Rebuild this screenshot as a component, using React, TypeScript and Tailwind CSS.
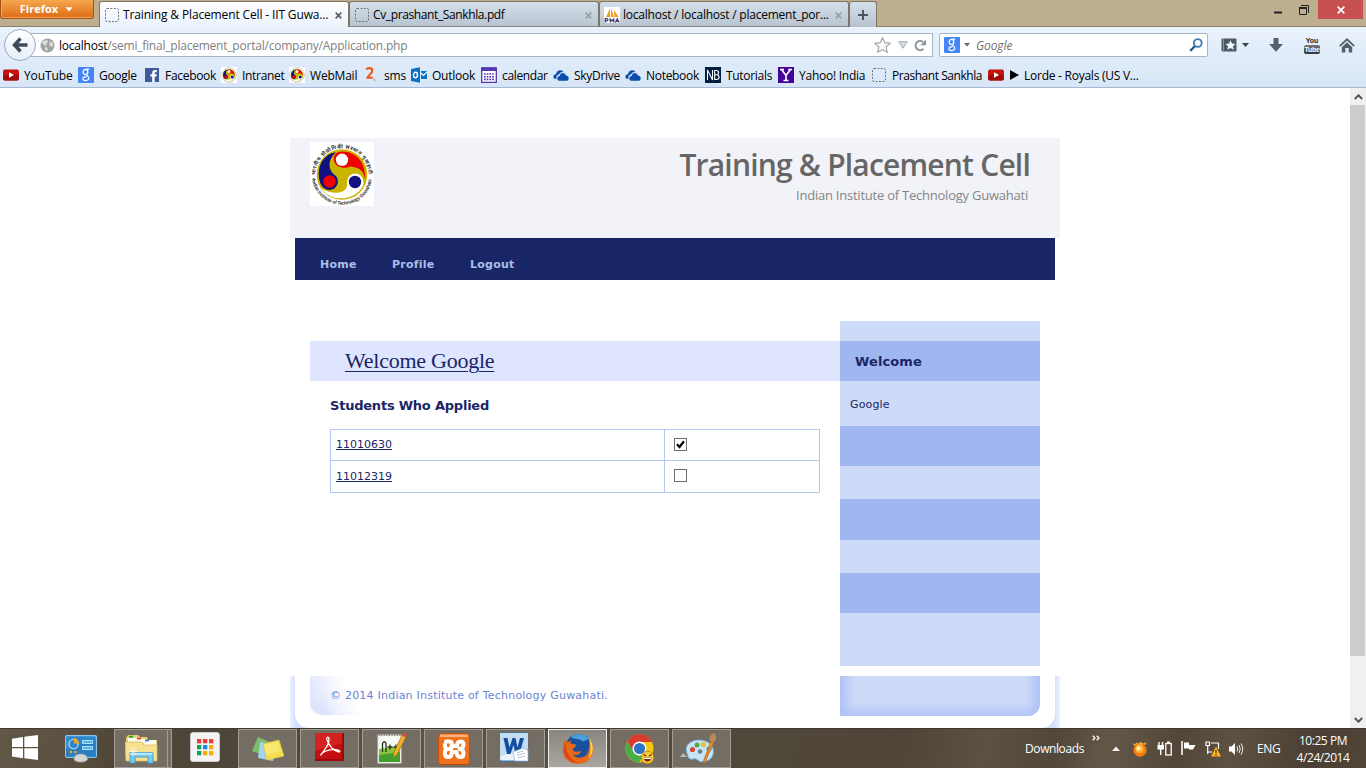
import React from "react";

type Kids = { children?: React.ReactNode; className?: string };

function Svg({ w, h, vb, className = "", children }: { w: number; h: number; vb?: string; className?: string; children: React.ReactNode }) {
  return (
    <svg width={w} height={h} viewBox={vb ?? `0 0 ${w} ${h}`} className={"shrink-0 " + className}>
      {children}
    </svg>
  );
}

/* ---------- small favicons ---------- */

const Blank = () => (
  <Svg w={16} h={16}>
    <rect x="1.5" y="1.5" width="13" height="13" rx="1.5" fill="none" stroke="#6f7377" strokeDasharray="2 1.4" />
  </Svg>
);

const YouTube = () => (
  <Svg w={16} h={16}>
    <rect x="0" y="2.5" width="16" height="11" rx="2" fill="#c4120f" />
    <rect x="0" y="8" width="16" height="5.5" rx="2" fill="#a30b0b" />
    <path d="M6 5.3 L11 8 L6 10.7Z" fill="#fff" />
  </Svg>
);

const GoogleIcon = () => (
  <Svg w={16} h={16}>
    <rect width="16" height="16" rx="1" fill="#4486f6" />
    <g fill="none" stroke="#fff">
      <ellipse cx="7.5" cy="5" rx="2.3" ry="2.6" strokeWidth="1.3" />
      <path d="M8.5 2.2H11.2M9 7.5C8 8.6 10.9 9 10.8 11.3C10.6 14.2 4.8 14.2 4.8 11.8C4.8 9.8 7.3 9.6 8.9 9.6" strokeWidth="1.2" />
    </g>
  </Svg>
);

const Facebook = () => (
  <Svg w={16} h={16}>
    <rect x="1" y="1" width="14" height="14" fill="#3f5c9a" />
    <path d="M8.2 15V9.6H6.4V7.2H8.2V5.6C8.2 3.8 9.3 2.9 11 2.9H12.8V5.2H11.6C10.9 5.2 10.7 5.5 10.7 6.1V7.2H12.8L12.5 9.6H10.7V15Z" fill="#fff" />
  </Svg>
);

function Triskele() {
  return (
    <>
      <circle cx="32" cy="32.5" r="25.3" fill="#c9b400" />
      <path d="M32 9.5C46 9.500 56 20 55.2 37.500C53 25.500 46 25.500 40 24.500C35 27 26 26 24 19C23 13 26 9.500 32 9.500Z" fill="#f00000" />
      <path d="M26 10.300C14 12 6 24 9.700 39C11 46 17 49 22 47.500C28 46 29.500 38 26 34C18 29 17 18 26 10.300Z" fill="#11117f" />
      <path d="M11.500 46.500C20 60 44 60 53 44C55 37 51 31.500 45 31.500C39 31.500 36.500 37 37 43C37 51 24 54 11.500 46.500Z" fill="#fff" />
      <circle cx="32" cy="17.800" r="6.200" fill="#fff" />
      <circle cx="19.500" cy="39.500" r="6.200" fill="#f00000" />
      <circle cx="45" cy="40" r="6.200" fill="#11117f" />
    </>
  );
}

const MiniSeal = () => (
  <Svg w={16} h={16} vb="0 0 64 64">
    <rect width="64" height="64" fill="#fff" />
    <circle cx="32" cy="32" r="29" fill="none" stroke="#8d8a80" strokeWidth="3" strokeDasharray="4 3" />
    <Triskele />
  </Svg>
);

const Sms = () => (
  <Svg w={16} h={16}>
    <path d="M2.500 2.800C3.200 .5 8.300 .4 8.300 3.700C8.300 6.300 4.500 8 3.500 10.800H9" fill="none" stroke="#ea5b1b" strokeWidth="2.100" />
    <path d="M8 11.500L11 11L12.500 14L10 14.800Z" fill="#c5cbd0" />
  </Svg>
);

const Outlook = () => (
  <Svg w={16} h={16}>
    <path d="M0 2L9 .2V15.800L0 14Z" fill="#0a72c6" />
    <ellipse cx="4.500" cy="8" rx="2" ry="2.700" fill="none" stroke="#fff" strokeWidth="1.400" />
    <path d="M10 4H16V12H10Z" fill="#0a72c6" />
    <path d="M10 6L12.500 8.500L16 4.800" fill="none" stroke="#fff" strokeWidth="1.200" />
  </Svg>
);

const Calendar = () => (
  <Svg w={16} h={16}>
    <path d="M.7 1H15.300V15.300H.7Z" fill="#fff" stroke="#5436ae" strokeWidth="1.300" />
    <path d="M.5 .5H15.500V4H.5Z" fill="#5436ae" />
    <path d="M3 7H13.500M3 9.700H13.500M3 12.400H13.500" stroke="#5436ae" strokeWidth="1.600" strokeDasharray="1.700 1" />
  </Svg>
);

const Cloud = () => (
  <Svg w={16} h={16} vb="0 1 16.800 13">
    <path d="M1.500 11.500C-.8 9.500 1 6.500 3.200 6.800C3.800 2.400 8.500 1 11 4.300C7.800 4 6.300 6 6 7.200C4 7.200 3 9.500 3.800 11.500Z" fill="#0c4cab" />
    <path d="M6 13.500C3.500 12 4.500 8.500 7 8.500C7.500 5.200 12 4 13.500 8C16.800 8 17.500 12.300 15 13.500Z" fill="#0c4cab" />
  </Svg>
);

const Nb = () => (
  <Svg w={16} h={16}>
    <rect width="16" height="16" fill="#021d41" />
    <path d="M2.500 13V3L7.500 13V3M9.700 3V13M9.500 3.500H11.500C14.300 3.500 14.300 7.700 11.500 7.700H9.500M11.500 7.700C15 7.700 15 12.500 11.500 12.500H9.500" fill="none" stroke="#fff" strokeWidth="1.100" />
  </Svg>
);

const Yahoo = () => (
  <Svg w={16} h={16}>
    <rect width="16" height="16" fill="#44039b" />
    <path d="M3.500 2.500L8 8.500L12.500 2.500M8 8V13.800M2 2.500H6M10.200 2.500H14M5.500 13.500H10.500" fill="none" stroke="#fff" strokeWidth="1.600" />
  </Svg>
);

const Pma = () => (
  <Svg w={16} h={16}>
    <rect width="16" height="16" fill="#fff" />
    <path d="M2 10L6 1.500V10ZM7 10V1L10 10ZM10.500 10L10 3L14.500 10Z" fill="#f89c0e" />
    <path d="M1.200 15.500V11.700H3.200Q4.900 12.700 3.200 13.800H1.200M6.200 15.500V12L8 14L9.800 12V15.500M11.300 15.500L13.300 11.800L15.200 15.500M12.200 14.300H14.500" fill="none" stroke="#3c3c6c" strokeWidth="1.200" />
  </Svg>
);

const bookmarks: { icon: React.ReactNode; label: string; box: string; text: string }[] = [
  { icon: <YouTube />, label: "YouTube", box: "w-[75px]", text: "tracking-[-0.1px]" },
  { icon: <GoogleIcon />, label: "Google", box: "w-[66px]", text: "tracking-[-0.3px]" },
  { icon: <Facebook />, label: "Facebook", box: "w-[77px]", text: "tracking-[-0.3px]" },
  { icon: <MiniSeal />, label: "Intranet", box: "w-[68px]", text: "tracking-[-0.3px]" },
  { icon: <MiniSeal />, label: "WebMail", box: "w-[75px]", text: "tracking-[-0.2px]" },
  { icon: <Sms />, label: "sms", box: "w-[47px]", text: "-ml-[1px] tracking-[-0.2px]" },
  { icon: <Outlook />, label: "Outlook", box: "w-[70px]", text: "tracking-[-0.25px]" },
  { icon: <Calendar />, label: "calendar", box: "w-[72px]", text: "tracking-[-0.35px]" },
  { icon: <Cloud />, label: "SkyDrive", box: "w-[72px]", text: "tracking-[-0.3px]" },
  { icon: <Cloud />, label: "Notebook", box: "w-[80px]", text: "tracking-[-0.3px]" },
  { icon: <Nb />, label: "Tutorials", box: "w-[73px]", text: "tracking-[-0.3px]" },
  { icon: <Yahoo />, label: "Yahoo! India", box: "w-[93px]", text: "tracking-[-0.25px]" },
  { icon: <Blank />, label: "Prashant Sankhla", box: "w-[117px]", text: "tracking-[-0.45px]" },
  { icon: <YouTube />, label: "Lorde - Royals (US V...", box: "w-[160px]", text: "-ml-[1px] tracking-[-0.25px]" },
];

/* ---------- browser chrome ---------- */

function Tab({ icon, label, active, textClass }: { icon: React.ReactNode; label: string; active?: boolean; textClass: string }) {
  return (
    <div
      className={
        "flex h-[26px] w-[250px] shrink-0 items-center rounded-t-[3px] border border-b-0 pt-[1px] pl-[4px] " +
        (active ? "border-[#7f7565] bg-linear-to-b from-white to-[#eaf2fc]" : "border-[#7f7565] bg-linear-to-b from-[#d3dfe9] to-[#b7c3cf] shadow-[inset_0_-1px_0_#8d887d]")
      }
    >
      {icon}
      <span className={"ml-[3px] flex-1 whitespace-nowrap text-[12px] text-black " + textClass}>{label}</span>
      <Svg w={7} h={7} className="mr-[6px]">
        <path d="M.7 .7L6.300 6.300M6.300 .7L.7 6.300" stroke={active ? "#5d6063" : "#98a1a9"} strokeWidth="1.700" />
      </Svg>
    </div>
  );
}

function TitleBar() {
  return (
    <div className="flex h-[27px] items-start bg-[#beae90] shadow-[inset_0_-1px_0_#8a7f6b]">
      <div className="flex h-[19px] w-[94px] items-center justify-center rounded-b-[3px] border border-t-0 border-[#a5501a] bg-linear-to-b from-[#f5a74b] to-[#dd6a10] shadow-[inset_0_-1px_0_#f2a55c,inset_1px_0_0_#f4ad62]">
        <span className="-ml-[1px] text-[11px] font-bold text-white">Firefox</span>
        <Svg w={8} h={5} className="ml-[7px]"><path d="M.5 .3H7.500L4 4.600Z" fill="#fff" /></Svg>
      </div>
      <div className="flex h-[27px] pt-[1px] pl-[5px]">
        <Tab icon={<Blank />} label="Training & Placement Cell - IIT Guwa..." active textClass="tracking-[-0.14px]" />
        <Tab icon={<Blank />} label="Cv_prashant_Sankhla.pdf" textClass="tracking-[-0.38px]" />
        <Tab icon={<Pma />} label="localhost / localhost / placement_por..." textClass="tracking-[-0.23px]" />
        <div className="flex h-[26px] w-[28px] items-center justify-center rounded-t-[3px] border border-b-0 border-[#7f7565] bg-linear-to-b from-[#d3dfe9] to-[#b7c3cf]">
          <Svg w={10} h={10}><path d="M5 0V10M0 5H10" stroke="#4b5762" strokeWidth="2" /></Svg>
        </div>
      </div>
      <div className="ml-auto flex h-[19px] items-center pr-[3px]">
        <Svg w={8} h={3} className="mt-[5px] mr-[17px]"><path d="M0 1.500H8" stroke="#222" strokeWidth="2" /></Svg>
        <Svg w={10} h={10} className="mr-[9px]">
          <path d="M.5 2.500H7.500V9.500H.5Z" fill="none" stroke="#222" />
          <path d="M0 3H8" stroke="#222" strokeWidth="2" />
          <path d="M2 .5H9.500V8" fill="none" stroke="#222" />
        </Svg>
        <div className="flex h-[19px] w-[45px] items-center justify-center bg-[#c75050]">
          <Svg w={8} h={8}><path d="M.7 .7L7.300 7.300M7.300 .7L.7 7.300" stroke="#fff" strokeWidth="1.700" /></Svg>
        </div>
      </div>
    </div>
  );
}

function NavBar() {
  return (
    <div className="flex h-[36px] items-center">
      <div className="z-10 ml-[4px] flex size-[32px] shrink-0 items-center justify-center rounded-full border border-[#9aaabd] bg-linear-to-b from-white to-[#e5eef8]">
        <Svg w={16} h={16}>
          <path d="M8.500 1.500L2.500 8L8.500 14.500M2.500 8H15.500" fill="none" stroke="#3f4b59" strokeWidth="3.400" />
        </Svg>
      </div>
      <div className="-ml-[6px] flex h-[24px] w-[903px] shrink-0 items-center border border-[#a6b7ca] bg-white pl-[9px]">
        <Svg w={15} h={15}>
          <circle cx="7.500" cy="7.500" r="7" fill="#a2a3a4" />
          <path d="M3 3L7 2L8 4L6 6L7 8L4 7L2 5ZM9 2.500L13 5L12.500 9L10 8L9 6L10.500 4.500ZM5 9L8 10L7 13L5 12Z" fill="#dcdcdc" />
        </Svg>
        <span className="mt-[2px] ml-[4px] whitespace-nowrap text-[12px] tracking-[-0.22px] text-black">
          localhost<span className="text-[#808080]">/semi_final_placement_portal/company/Application.php</span>
        </span>
        <Svg w={17} h={16} className="ml-auto">
          <path d="M8.500 .8L10.800 5.700L16.200 6.300L12.200 9.900L13.300 15.200L8.500 12.600L3.700 15.200L4.800 9.900L.8 6.300L6.200 5.700Z" fill="#fafafa" stroke="#a4a8ac" strokeWidth="1.200" />
        </Svg>
        <Svg w={10} h={8} className="ml-[7px]"><path d="M.7 .7H9.300L5 7.300Z" fill="#d6dbe0" stroke="#a9b0b7" /></Svg>
        <Svg w={13} h={13} className="mr-[5px] ml-[6px]">
          <path d="M9.500 9.800A4.600 4.600 0 1 1 9 3" fill="none" stroke="#8995a1" strokeWidth="2" />
          <path d="M12 .5V6.300H6.300Z" fill="#8995a1" />
        </Svg>
      </div>
      <div className="ml-[6px] flex h-[24px] w-[269px] shrink-0 items-center rounded-[2px] border border-[#a6b7ca] bg-white pl-[4px]">
        <GoogleIcon />
        <Svg w={6} h={4} className="ml-[4px]"><path d="M0 0H6L3 3.500Z" fill="#666" /></Svg>
        <span className="mt-[2px] ml-[6px] text-[12px] tracking-[-0.1px] text-[#6f6f6f] italic">Google</span>
        <Svg w={14} h={14} className="mr-[4px] ml-auto">
          <circle cx="8.800" cy="5" r="3.900" fill="none" stroke="#3f7db5" strokeWidth="1.900" />
          <path d="M6 8L1.200 12.800" stroke="#275f98" strokeWidth="2.400" />
        </Svg>
      </div>
      <Svg w={16} h={14} className="ml-[13px]">
        <rect x=".5" y=".5" width="15" height="13" rx="1" fill="#4d5966" />
        <path d="M2.500 1V13" stroke="#8a95a0" />
        <path d="M9.500 2.300L11 5.600L14.500 6L11.900 8.300L12.700 11.800L9.500 10L6.300 11.800L7.100 8.300L4.500 6L8 5.600Z" fill="#f4f8fc" />
      </Svg>
      <Svg w={7} h={4} className="ml-[5px]"><path d="M0 0H7L3.500 4Z" fill="#3c4650" /></Svg>
      <Svg w={14} h={14} className="ml-[20px]"><path d="M4.500 0H9.500V6H14L7 13.800L0 6H4.500Z" fill="#536170" /></Svg>
      <div className="ml-[20px] flex w-[18px] flex-col items-center font-['Liberation_Sans',sans-serif]">
        <span className="h-[8px] text-[7px] leading-[8px] font-bold text-[#222]">You</span>
        <span className="h-[9px] w-[16px] rounded-[2px] bg-linear-to-b from-[#777] to-[#333] text-center text-[7px] leading-[9px] font-bold tracking-[-0.3px] text-white">Tube</span>
      </div>
      <Svg w={16} h={15} className="ml-[18px]">
        <path d="M.8 8.200L8 1.300L15.200 8.200" fill="none" stroke="#56606b" strokeWidth="1.700" />
        <path d="M2.800 9.200L8 4.300L13.200 9.200V14.500H9.700V10H6.300V14.500H2.800Z" fill="#56606b" />
      </Svg>
    </div>
  );
}

function BookmarkBar() {
  return (
    <div className="flex h-[24px] items-center pl-[3px]">
      {bookmarks.map((b, i) => (
        <div key={i} className={"flex shrink-0 items-center whitespace-nowrap " + b.box}>
          {b.icon}
          {i === 13 && (
            <Svg w={9} h={10} className="mr-[1px] ml-[6px]"><path d="M0 0L9 5L0 10Z" fill="#000" /></Svg>
          )}
          <span className={"mt-[2px] pl-[5px] text-[12px] text-black " + b.text}>{b.label}</span>
        </div>
      ))}
    </div>
  );
}

/* ---------- page ---------- */

function Seal() {
  return (
    <Svg w={64} h={64} className="bg-white">
      <defs>
        <path id="ringTop" d="M5.400 33A26.600 26.600 0 0 1 58.600 33" />
        <path id="ringBottom" d="M2 36A30.200 30.200 0 0 0 62 36" />
      </defs>
      <text fontSize="5.200" fontWeight="700" fill="#333" fontFamily="Noto Sans, sans-serif">
        <textPath href="#ringTop" textLength="82">भारतीय प्रौद्योगिकी संस्थान गुवाहाटी</textPath>
      </text>
      <text fontSize="4.800" fontWeight="700" fill="#333" fontFamily="Liberation Sans, sans-serif">
        <textPath href="#ringBottom" textLength="86">•Indian Institute of Technology Guwahati•</textPath>
      </text>
      <Triskele />
    </Svg>
  );
}

function Check({ checked }: { checked?: boolean }) {
  return (
    <Svg w={13} h={13}>
      <rect x=".5" y=".5" width="12" height="12" fill="#fff" stroke="#707070" />
      {checked && <path d="M3 6.300L5.500 9L10 3.300" fill="none" stroke="#000" strokeWidth="2.200" />}
    </Svg>
  );
}

const Bar = ({ className = "", children }: Kids) => <div className={"shrink-0 " + className}>{children}</div>;

function Page() {
  return (
    <div className="flex h-[640px]">
      <div className="flex flex-1 flex-col items-center overflow-hidden bg-white pt-[50px] font-[DejaVu_Sans,Verdana,sans-serif] text-[#192666]">
        <header className="flex h-[100px] w-[770px] shrink-0 justify-between bg-[#f2f3f8] pt-[4px] pr-[30px] pl-[20px] font-['Open_Sans',sans-serif]">
          <Seal />
          <div className="flex flex-col items-end">
            <div className="mt-[2px] h-[42px] text-[30px] leading-[42px] font-semibold tracking-[-0.8px] whitespace-nowrap text-[#666]">Training &amp; Placement Cell</div>
            <div className="mr-[2px] text-[13px] leading-[18px] tracking-[-0.23px] whitespace-nowrap text-[#858585]">Indian Institute of Technology Guwahati</div>
          </div>
        </header>
        <nav className="flex h-[42px] w-[760px] shrink-0 bg-[#192666] pt-[19px] pl-[25px] text-[11px] leading-[16px] font-bold tracking-[0.25px] text-[#a9bee9]">
          <span className="w-[72px]">Home</span>
          <span className="w-[78px]">Profile</span>
          <span>Logout</span>
        </nav>
        <div className="flex h-[396px] w-[730px] shrink-0 pt-[41px]">
          <main className="w-[530px] pt-[20px]">
            <h1 className="h-[40px] bg-[#dfe4ff] pl-[35px] font-['Liberation_Serif',serif] text-[22px] leading-[40px] tracking-[-0.25px]">
              <span className="underline decoration-1 underline-offset-[3px]">Welcome Google</span>
            </h1>
            <div className="px-[20px]">
              <h2 className="h-[48px] pt-[16px] text-[13px] leading-[17px] font-bold tracking-[-0.22px]">Students Who Applied</h2>
              <div className="border border-[#b5c7f5] text-[11px] leading-[15px]">
                <div className="flex h-[31px] border-b border-[#b5c7f5]">
                  <div className="w-[334px] border-r border-[#b5c7f5] pt-[7px] pl-[5px]"><a className="underline underline-offset-[1px]">11010630</a></div>
                  <div className="pt-[8px] pl-[9px]"><Check checked /></div>
                </div>
                <div className="flex h-[31px]">
                  <div className="w-[334px] border-r border-[#b5c7f5] pt-[8px] pl-[5px]"><a className="underline underline-offset-[1px]">11012319</a></div>
                  <div className="pt-[8px] pl-[9px]"><Check /></div>
                </div>
              </div>
            </div>
          </main>
          <aside className="flex h-[345px] w-[200px] flex-col bg-[#cedbf8]">
            <Bar className="h-[20px]" />
            <Bar className="h-[40px] bg-[#a0b6f1] pl-[15px] text-[13px] leading-[42px] font-bold tracking-[0.1px]">Welcome</Bar>
            <Bar className="h-[45px] pl-[10px] text-[11px] leading-[48px] tracking-[0.15px]">Google</Bar>
            <Bar className="h-[40px] bg-[#a0b6f1]" />
            <Bar className="h-[33px]" />
            <Bar className="h-[41px] bg-[#a0b6f1]" />
            <Bar className="h-[33px]" />
            <Bar className="h-[40px] bg-[#a0b6f1]" />
          </aside>
        </div>
        <div className="w-[770px] shrink-0 bg-[linear-gradient(90deg,#eef2fe_0px,#d3defb_6px,#d3defb_764px,#eef2fe_770px)] px-[5px]">
          <footer className="flex h-[52px] rounded-b-[14px] bg-white px-[15px]">
            <div className="h-[39px] w-[530px] rounded-bl-[12px] bg-[radial-gradient(ellipse_50px_39px_at_50px_0px,#ffffff_30%,#edf0fe_75%,#dde4fc_115%)] bg-[length:50px_39px] bg-no-repeat text-[11px] leading-[39px] tracking-[0.22px] text-[#6b83d3]">
              <div className="h-[39px] bg-[linear-gradient(90deg,transparent_15px,#ffffff_50px)] pl-[20px]">© 2014 Indian Institute of Technology Guwahati.</div>
            </div>
            <div className="h-[40px] w-[200px] rounded-br-[12px] bg-[#cedbf8] bg-[linear-gradient(90deg,#aec2f5_0px,transparent_15px,transparent_185px,#aec2f5_200px),linear-gradient(0deg,#b3c6f6_0px,transparent_15px)]" />
          </footer>
        </div>
      </div>
      <div className="flex w-[16px] flex-col items-center bg-[#f0f0f0]">
        <Svg w={9} h={6} className="mt-[6px]"><path d="M.8 5L4.500 1.300L8.200 5" fill="none" stroke="#555" strokeWidth="2" /></Svg>
        <div className="mt-[5px] h-[551px] w-full border-r border-[#f0f0f0] bg-[#cdcdcd]" />
        <Svg w={9} h={6} className="mt-auto mb-[5px]"><path d="M.8 1L4.500 4.700L8.200 1" fill="none" stroke="#555" strokeWidth="2" /></Svg>
      </div>
    </div>
  );
}

/* ---------- taskbar ---------- */

const Windows = () => (
  <Svg w={26} h={25}><path d="M0 3.700L11 2V12H0ZM12.300 1.800L26 0V12H12.300ZM0 13.200H11V23.200L0 21.600ZM12.300 13.200H26V25L12.300 23.300Z" fill="#fff" /></Svg>
);

const ControlPanel = () => (
  <Svg w={32} h={28}>
    <rect x=".6" y=".6" width="30.800" height="21.800" rx="1.500" fill="#2e86cb" stroke="#8bc7ee" strokeWidth="1.200" />
    <path d="M1 14L31 4V22H1Z" fill="#2475b8" opacity=".5" />
    <circle cx="8.500" cy="9" r="4.600" fill="none" stroke="#a9dbf8" strokeWidth="1.400" />
    <path d="M9 8.500V3A5.500 5.500 0 0 1 14 8.500Z" fill="#f5a623" />
    <path d="M17.500 5.500H27.500V8.500H17.500ZM17.500 11.500H27.500V14.500H17.500Z" fill="#4ab4ec" stroke="#c5e8fa" strokeWidth=".9" />
    <circle cx="6" cy="17" r="1.300" fill="#f5a623" /><circle cx="10.500" cy="17" r="1.300" fill="#f5a623" />
    <path d="M9 24.500C9 20 13 18.500 16.500 19C20.500 19 23 21.500 22.500 24.500C21 28 10.500 28 9 24.500Z" fill="#d4d5d6" stroke="#8f9295" strokeWidth=".7" />
  </Svg>
);

const Explorer = () => (
  <Svg w={33} h={30}>
    <path d="M1 4L3 1H13L15 3H22L23 6H32V27H1Z" fill="#e9cf72" />
    <path d="M3 4H12V8H3ZM11 5H21V9H11ZM19 6H31V11H19Z" fill="#fffdf2" />
    <rect x="4" y="1.800" width="4" height="1.800" fill="#19a337" /><rect x="12" y="3.600" width="4" height="1.800" fill="#d6422b" /><rect x="20" y="5.600" width="4" height="1.800" fill="#2a83d8" />
    <path d="M0 8H17L19 11H32V27H1Z" fill="#f6e191" stroke="#d9bd5d" strokeWidth=".8" />
    <path d="M5 29V18.500H28V29H23V23H10V29Z" fill="#7bcbed" stroke="#3a9cc9" strokeWidth=".9" />
    <path d="M5.500 18.800H27.500V20.800H5.500Z" fill="#c2e9f8" />
    <path d="M8 13V22M4 17.500H13M5 14L12 21M12 14L5 21" stroke="#fff" strokeWidth=".6" />
  </Svg>
);

const gridColors = ["#f23b36", "#f23b36", "#f23b36", "#0e9f58", "#1587ea", "#f9ad00", "#0e9f58", "#f9ad00", "#f9ad00"];
const Apps = () => (
  <Svg w={30} h={30}>
    <rect x=".5" y=".5" width="29" height="29" rx="2.500" fill="#f4f4f4" stroke="#ccc" />
    {gridColors.map((c, i) => <rect key={i} x={7 + (i % 3) * 6} y={7 + Math.floor(i / 3) * 6} width="4.300" height="4.300" fill={c} />)}
  </Svg>
);

const Notes = () => (
  <Svg w={32} h={26}>
    <path d="M6 1L20 7L14 20L0 15Z" fill="#7dbd6e" />
    <path d="M8 6L24 9L21 25L6 22Z" fill="#a3d3f1" />
    <path d="M11 8L27 4L32 20L15 24Z" fill="#f3df55" stroke="#dcc53d" strokeWidth=".7" />
    <path d="M12 9L26 5.500L29 15L14 19Z" fill="#fbea7b" opacity=".7" />
  </Svg>
);

const Acrobat = () => (
  <Svg w={29} h={28}>
    <rect width="29" height="28" fill="#9d0809" /><path d="M0 0L27 0L27 26H0Z" fill="#c40e10" />
    <path d="M0 0H27V10L0 18Z" fill="#df302c" opacity=".6" />
    <path d="M5.500 22.500C8 18 14.500 13 14 6C13.500 3 11 4 12 7C14 12 18 18 24 19C26.500 18 22 15.500 15 16.800C10 18 6 20.500 5.500 22.500Z" fill="none" stroke="#fff" strokeWidth="1.300" />
  </Svg>
);

const Notepad = () => (
  <Svg w={30} h={32}>
    <rect x="1" y="3" width="23" height="28" fill="#f7f9f4" stroke="#d9ded2" />
    <path d="M2 17L23 14V30H2Z" fill="#8cc63e" /><path d="M2 23L23 20V30H2Z" fill="#429f2c" />
    <path d="M1.500 3H24" stroke="#888" strokeWidth="2" strokeDasharray="1.300 1.300" />
    <path d="M5.500 20V11.500Q7.500 8 9 11.500V20M10.500 15H15.500M13 12.500V17.500M16.500 15H21.500M19 12.500V17.500" fill="none" stroke="#243315" strokeWidth="1.300" />
    <path d="M16 26L17 20L26 1L30 3L20 22.500Z" fill="#f2b12a" stroke="#a66d15" strokeWidth=".7" />
    <path d="M26 1L30 3L29 5.500L25 3.500Z" fill="#d04848" />
  </Svg>
);

const Xampp = () => (
  <Svg w={32} h={32}>
    <rect x=".5" y=".5" width="31" height="31" rx="3" fill="#f0711c" stroke="#c34e0b" />
    <path d="M2 1.500H30V4H2Z" fill="#f8b182" />
    <g fill="none" stroke="#fff" strokeWidth="4" strokeLinecap="round" strokeLinejoin="round">
      <path d="M8 8.500H11Q14 8.500 14 11.500V13Q14 16 11 16Q7 16 7 19V21Q7 24 10 24Q13.500 24 13.500 20.500Q13.500 19 16 19H18.500Q19 24 22.500 24Q25.500 24 25.500 20.500Q25.500 16.500 22 16" />
      <path d="M8.500 15.500Q6.500 14 7 11.500M13.500 13H19Q19 8.500 22.500 8.500Q25.500 8.500 25.500 11.500Q25.500 15.500 21.500 16" />
    </g>
  </Svg>
);

const Word = () => (
  <Svg w={30} h={30}>
    <rect x=".6" y="1" width="28" height="28" rx="1.500" fill="#eaf3fb" stroke="#2d76bb" />
    <path d="M1 1H29V17L1 24Z" fill="#c2dcf2" />
    <path d="M4.500 6H8.500L10.500 15.500L13.500 6H16.500L18.500 15.500L21 6H25L20.500 22H16.500L14.500 13L11.500 22H8Z" fill="#124e9d" />
    <path d="M14 20L24 16L29 18V29H16Z" fill="#fff" stroke="#8cb2d3" strokeWidth=".7" />
    <path d="M18 21L25 18.500M18 23.500L26 21M19 26L26 24" stroke="#96add0" strokeWidth=".8" />
  </Svg>
);

const FirefoxIcon = () => (
  <Svg w={32} h={32}>
    <circle cx="17" cy="14.500" r="13.500" fill="#1b4f9d" />
    <path d="M9 4C14 -1 24 0 28 7C24 5 22 10 20 8C17 5 13 7 9 4Z" fill="#47a0dc" />
    <path d="M27 5C33 12 32 22 27 27C20 33 8 32 3 25C0 20 0 12 3 6L5 9.500L9 7.500L8.500 10.500L14 11.500C14.500 14 12 14.500 10.500 16C11.500 19 15 19.500 19 18C18 22.500 13 22.500 11 21.500C15 27 24 25 26 19C28 13 27.500 9 27 5Z" fill="#e8681a" />
    <path d="M27 5C32.500 12 32 21 26 26.500C29 20 29 12 27 5Z" fill="#fbd04a" />
    <path d="M3 8C4 17 6 26 16 29.500C9 30.500 2 25 1.500 17Z" fill="#d84818" />
  </Svg>
);

const Chrome = () => (
  <Svg w={30} h={30}>
    <circle cx="14.500" cy="14.500" r="14" fill="#f4c80d" />
    <path d="M2.300 7.500A14 14 0 0 1 27 8H14.500A7 7 0 0 0 8.500 18Z" fill="#db3b2e" />
    <path d="M2.300 7.500A14 14 0 0 0 14 28.500L20.500 18A7 7 0 0 1 8.500 18Z" fill="#4aae48" />
    <circle cx="14.500" cy="14.500" r="7" fill="#fff" /><circle cx="14.500" cy="14.500" r="5.600" fill="#2d73c7" />
    <circle cx="22.500" cy="23.500" r="6.300" fill="#f9c934" stroke="#ac7316" strokeWidth=".7" />
    <path d="M18.500 20.500L21 22M26.500 20.500L24 22" stroke="#4a2b08" strokeWidth="1.100" />
    <path d="M18.500 23.500H26.500C26 29 19 29 18.500 23.500Z" fill="#832814" /><path d="M19 23.700H26V25H19Z" fill="#fff" />
  </Svg>
);

const Paint = () => (
  <Svg w={38} h={32}>
    <path d="M0 24L3 20L7 24Z" fill="#b9babb" />
    <path d="M7 20C3 9 17 5 25 8C36 11 36 26 26 28C18 31 18 24 13 26C9 27 8 24 7 20Z" fill="#c6e4f5" stroke="#77b4db" />
    <circle cx="12.500" cy="16.500" r="2.600" fill="#d84537" /><circle cx="17" cy="12" r="2.500" fill="#53ad3c" /><circle cx="23.500" cy="11.500" r="2.600" fill="#f1bd2e" /><circle cx="29" cy="16" r="2.500" fill="#418bd3" /><circle cx="20" cy="18.500" r="2.300" fill="#657e90" />
    <path d="M23 29L31 8L34 9L25 29.500Z" fill="#e58a2d" stroke="#af5c15" strokeWidth=".6" />
    <path d="M30 8C28 4 31 1 35 0C35 3 38 5 34 9Z" fill="#b78a5b" />
  </Svg>
);

function Task({ children, active, className = "" }: Kids & { active?: boolean }) {
  return (
    <div
      className={
        "flex h-[39px] w-[59px] shrink-0 items-center justify-center border " +
        (active ? "border-[#f0efec] bg-linear-to-b from-[#898681] to-[#aaa69f] " : "border-[#a39e95] bg-[#736d64] ") + className
      }
    >
      {children}
    </div>
  );
}

function Taskbar() {
  return (
    <div className="flex h-[40px] items-center bg-[linear-gradient(100deg,#625848_0%,#5b503f_6%,#4c4437_9%,#50473b_22%,#5d5446_29%,#50473b_55%,#4f4538_66%,#5c5142_72%,#51473a_77%,#635848_81%,#514638_86%,#5d5141_90%,#493f33_96%,#4f4538_100%)] pt-[1px] text-white shadow-[inset_0_1px_0_#3f382e]">
      <div className="flex w-[114px] items-center pb-[2px] pl-[12px]"><Windows /><div className="ml-[27px] pt-[2px]"><ControlPanel /></div></div>
      <div className="flex h-[39px] w-[54px] items-center justify-center border border-[#a39e95] bg-[#736d64]"><Explorer /></div>
      <div className="h-[39px] w-[4px] border-y border-r border-[#a39e95] bg-[#736d64]" />
      <div className="flex w-[66px] justify-center pb-[3px]"><Apps /></div>
      <div className="flex gap-[3px]">
        <Task><Notes /></Task>
        <Task className="pb-[3px]"><Acrobat /></Task>
        <Task className="pb-[2px]"><Notepad /></Task>
        <Task><Xampp /></Task>
        <Task className="pr-[3px] pb-[3px]"><Word /></Task>
        <Task active><FirefoxIcon /></Task>
        <Task><Chrome /></Task>
        <Task className="pr-[5px]"><Paint /></Task>
      </div>
      <span className="ml-[294px] w-[60px] shrink-0 text-[12px] tracking-[-0.4px]">Downloads</span>
      <Svg w={8} h={6} className="mt-[-22px] ml-[7px]"><path d="M.7 .7L3 3L.7 5.300M4.700 .7L7 3L4.700 5.300" fill="none" stroke="#fff" strokeWidth="1.300" /></Svg>
      <Svg w={8} h={5} className="ml-[12px]"><path d="M0 5L4 .5L8 5Z" fill="#f3f3f3" /></Svg>
      <Svg w={16} h={16} className="ml-[12px]">
        <circle cx="8" cy="9.200" r="6.500" fill="#f57d10" /><circle cx="7.500" cy="8" r="4" fill="#ffb53c" /><circle cx="6.500" cy="7.500" r="2" fill="#fff0b8" />
        <path d="M.5 2.500L3 3L5 1.500L6.500 2.500L9 .5L10.500 2.500L14.500 1L13.500 4L11 3.500L8 4.300L5 3.500L2.500 5Z" fill="#f5a031" />
      </Svg>
      <Svg w={16} h={15} className="ml-[9px]">
        <rect x="8.800" y="2.500" width="5.400" height="11.500" fill="none" stroke="#fff" strokeWidth="1.300" />
        <path d="M10 1.200H13" stroke="#fff" strokeWidth="1.500" />
        <path d="M.5 4H7V8.500H.5Z" fill="#fff" />
        <path d="M2 1V4M5.500 1V4M3.700 8V14" stroke="#fff" strokeWidth="1.400" />
      </Svg>
      <Svg w={15} h={15} className="ml-[8px]"><path d="M1 0V14" stroke="#fff" strokeWidth="1.600" /><path d="M3 1.500H8V4H14.500L12 8.500H8V7.500H3Z" fill="#fff" /></Svg>
      <Svg w={16} h={16} className="ml-[9px]">
        <path d="M1 1H4.500V4.500H1ZM2.700 4.500V13M6 2H13.500V8M2.700 11H7" fill="none" stroke="#fff" strokeWidth="1.200" />
        <path d="M11 5.500L16 15.500H6Z" fill="#f9b41e" /><path d="M11 9V12M11 13V14.500" stroke="#503b09" strokeWidth="1.300" />
      </Svg>
      <Svg w={15} h={14} className="ml-[8px]"><path d="M0 4.500H2.500L6 1V13L2.500 9.500H0Z" fill="#fff" /><path d="M8 4.500Q9.500 7 8 9.500M10 3Q12.500 7 10 11M12 1.500Q15.500 7 12 12.500" fill="none" stroke="#f1f1f1" /></Svg>
      <span className="ml-[13px] w-[25px] text-[12px] tracking-[-0.4px]">ENG</span>
      <div className="ml-[13px] flex w-[56px] flex-col items-center text-[12px] leading-[17px] tracking-[-0.45px] whitespace-nowrap">
        <span>10:25 PM</span>
        <span>4/24/2014</span>
      </div>
    </div>
  );
}

export default function App() {
  return (
    <div className="flex h-[768px] w-[1366px] flex-col overflow-hidden font-['Open_Sans',sans-serif]">
      <TitleBar />
      <div className="h-[61px] border-b border-[#a7b9d2] bg-linear-to-b from-[#eaf2fc] to-[#d7e6f7]">
        <NavBar />
        <BookmarkBar />
      </div>
      <Page />
      <Taskbar />
    </div>
  );
}
